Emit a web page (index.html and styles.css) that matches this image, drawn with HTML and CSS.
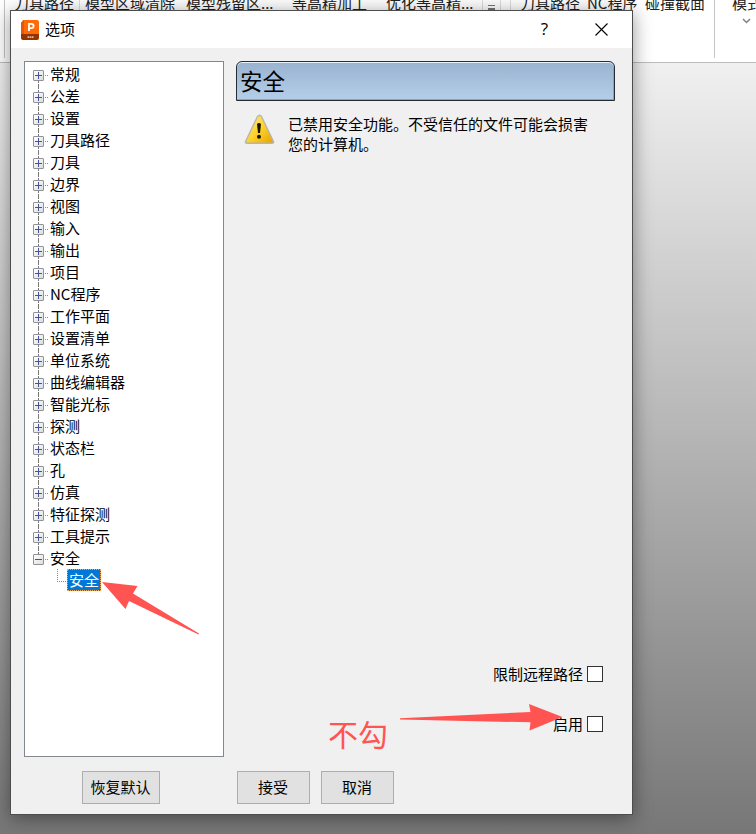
FILE: index.html
```html
<!DOCTYPE html>
<html lang="zh-CN">
<head>
<meta charset="utf-8">
<title>选项</title>
<link rel="stylesheet" href="styles.css">
</head>
<body>
<div class="ribbon">
  <i class="rule"></i>
  <span>刀具路径</span><i class="rule short"></i>
  <span>模型区域清除</span><span>模型残留区...</span><span>等高精加工</span><span>优化等高精...</span>
  <i class="rule short"></i><i class="more"></i><i class="rule short"></i><i class="rule short"></i>
  <span>刀具路径</span><span>NC程序</span><span>碰撞截面</span>
  <i class="rule"></i>
  <span class="mode">模式<svg width="9" height="6" viewBox="0 0 9 6"><path d="M1 1l3.5 3.5L8 1" fill="none" stroke="#808080" stroke-width="1.5"/></svg></span>
</div>
<div class="dialog">
  <header class="titlebar">
    <svg class="logo" width="18" height="20" viewBox="0 0 18 20">
      <path d="M0 3L3 0v17l-3 1z" fill="#d64a05"/><path d="M2 0h14q2 0 2 2v13H0V3z" fill="#ff6b08"/><path d="M0 3L3 0v14H0z" fill="#e95706"/><path d="M0 14h18v4q0 2-2 2H2q-2 0-2-2z" fill="#943500"/>
      <path d="M8 11V3.9h2.4q2.2 0 2.2 2.1T10.400 8.100H8" fill="none" stroke="#fff" stroke-width="1.8"/>
      <path d="M6.500 17.200h6.500" stroke="#dfb9a3" stroke-width="1.800" stroke-dasharray="1.600 .5"/>
    </svg>
    <h1>选项</h1>
    <span class="help">?</span>
    <svg class="close" width="13" height="13" viewBox="0 0 13 13"><path d="M.5.5l12 12M12.500.5l-12 12" stroke="#000" stroke-width="1.100"/></svg>
  </header>
  <main class="content">
    <ul class="tree">
      <li>常规</li><li>公差</li><li>设置</li><li>刀具路径</li><li>刀具</li><li>边界</li><li>视图</li><li>输入</li><li>输出</li><li>项目</li><li>NC程序</li><li>工作平面</li><li>设置清单</li><li>单位系统</li><li>曲线编辑器</li><li>智能光标</li><li>探测</li><li>状态栏</li><li>孔</li><li>仿真</li><li>特征探测</li><li>工具提示</li><li class="open">安全</li>
      <li class="child"><span>安全</span></li>
    </ul>
    <section class="panel">
      <h2>安全</h2>
      <div class="warning">
        <svg width="31" height="31" viewBox="0 0 31 31">
          <defs><linearGradient id="gold" x2="1" y2="1"><stop stop-color="#ffe98a"/><stop offset=".5" stop-color="#ffd32b"/><stop offset="1" stop-color="#e7a500"/></linearGradient></defs>
          <path d="M13 2q2.500-3 5 0l12 25q1 3-2 3H3q-3 0-2-3z" fill="#b5b5b2"/>
          <path d="M14 3q1.500-2 3 0l11.500 24q.5 1.500-1 1.500h-24q-1.500 0-1-1.500z" fill="url(#gold)"/>
          <path d="M13 10q2-2 4 0l-1 9h-2z" fill="#171500"/><circle cx="15" cy="22.800" r="2" fill="#171500"/>
        </svg>
        <p>已禁用安全功能。不受信任的文件可能会损害<br>您的计算机。</p>
      </div>
      <div class="options">
        <label><span>限制远程路径</span><input type="checkbox"></label>
        <label><span>启用</span><input type="checkbox"></label>
      </div>
    </section>
  </main>
  <footer class="actions"><button class="reset">恢复默认</button><button>接受</button><button>取消</button></footer>
</div>
<div class="note">不勾</div>
<svg class="marks" width="756" height="834" viewBox="0 0 756 834" fill="#ff5452">
  <path d="M102 582L137.500 586 133 593.500 199 633.500 198.500 634.500 129 601 125.500 609z"/>
  <path d="M400 718.300L530.500 712 529 704 562.500 717 529.500 730.500 530.500 722.300 400 719.600z"/>
</svg>
</body>
</html>
```
FILE: styles.css
```css
*, *::before, *::after { box-sizing: border-box; }
body {
  margin: 0;
  width: 756px;
  height: 834px;
  overflow: hidden;
  position: relative;
  background: linear-gradient(#f0f0f0 62px, #777 834px);
  color: #000;
  font: 15px/20px "Noto Sans CJK SC", sans-serif;
}
.ribbon {
  display: grid;
  grid-template-columns: 10px 65px 6px 101px 106px 94px 96px 6px 12px 10px 10px 67px 58px 69px 18px 1fr;
  padding-left: 4px;
  height: 63px;
  background: #fff;
  border-bottom: 1px solid #bdbdbd;
  color: #222;
  white-space: nowrap;
}
.ribbon span { margin-top: -7px; }
.rule { width: 1px; height: 58px; background: #c4c4c4; }
.rule.short { height: 10px; background: #ddd; }
.more { width: 7px; height: 5px; margin-top: 5px; border: solid #777; border-width: 1px 0 2px; }
.mode svg { display: block; margin: 5px 0 0 10px; }
.dialog {
  position: absolute;
  left: 10px;
  top: 10px;
  width: 623px;
  height: 805px;
  display: flex;
  flex-direction: column;
  background: #f0f0f0;
  border: 1px solid #4d4d4d;
  box-shadow: 0 3px 18px rgba(0, 0, 0, .42);
}
.titlebar {
  display: flex;
  align-items: center;
  height: 37px;
  padding: 0 24px 0 10px;
  background: #fff;
}
.titlebar h1 { margin: -2px 0 0 6px; font-size: 15px; font-weight: 400; }
.titlebar .close { margin: -1px 0 0 47px; }
.help { margin: -2px 0 0 auto; font: 17px "Open Sans", sans-serif; }
.content { display: flex; gap: 12px; height: 709px; padding: 13px 17px 0 13px; }
.tree {
  width: 200px;
  height: 696px;
  margin: 0;
  padding: 2px 0 0 8px;
  list-style: none;
  background: #fff;
  border: 1px solid #828790;
}
.tree li {
  display: flex;
  align-items: center;
  height: 22px;
  padding-bottom: 2px;
  background: repeating-linear-gradient(#777 0 3px, transparent 3px 4px) 5px 0 / 1px 22px no-repeat;
}
.tree li:first-child { background-position: 5px 12px; }
.tree li::before {
  content: "";
  flex: none;
  width: 11px;
  height: 11px;
  margin-top: 3px;
  border: 1px solid #929292;
  border-radius: 1px;
  background: linear-gradient(#3f5796, #3f5796) center / 7px 1px no-repeat, linear-gradient(#3f5796, #3f5796) center / 1px 7px no-repeat, linear-gradient(135deg, #fff, #ddd);
}
.tree li::after { content: ""; order: -1; width: 3px; margin: 2px -15px 0 12px; border-top: 1px dotted #888; }
.tree li:not(.child) { text-indent: 6px; }
.tree .open { background-size: 1px 8px; }
.tree .open::before { background: linear-gradient(#3f5796, #3f5796) center / 7px 1px no-repeat, linear-gradient(135deg, #fff, #ddd); }
.tree .child { padding: 0 0 2px 24px; background: none; }
.tree .child::before { width: 9px; height: 13px; margin: -9px 1px 0 0; border: dotted #888; border-width: 0 0 1px 1px; border-radius: 0; background: none; }
.tree .child::after { display: none; }
.tree .child span { flex: none; width: 34px; height: 22px; padding-left: 1px; color: #fff; background: #0078d7; border: 1px dotted #f7a354; line-height: 20px; }
.panel { display: flex; flex-direction: column; flex: 1; }
.panel h2 {
  margin: 0;
  height: 40px;
  padding: 0 3px;
  border: 1px solid #252c32;
  border-radius: 6px 6px 0 0;
  background: linear-gradient(#99b2cf, #b5cfea);
  box-shadow: inset 0 1px #e7f2ff, inset -1px -1px #48bddd;
  font-size: 22.5px;
  font-weight: 400;
  line-height: 37px;
}
.warning { display: flex; gap: 13px; margin: 13px 0 0 8px; }
.warning p { margin: 0; white-space: nowrap; }
.options { display: flex; flex-direction: column; align-items: flex-end; gap: 30px; margin: auto 12px 23px 0; }
.options label { display: flex; align-items: center; height: 20px; gap: 4px; }
.options input { appearance: none; width: 16px; height: 16px; margin: 0; border: 1px solid #333; background: #fff; }
.actions { display: flex; gap: 11px; padding: 14px 0 0 71px; }
.actions button { width: 73px; height: 33px; padding: 0 1px 2px 0; border: 1px solid #adadad; background: #e1e1e1; color: #000; font: inherit; }
.actions .reset { width: 78px; margin-right: 66px; }
.note { position: absolute; left: 328px; top: 713px; color: #ff5452; font-size: 30px; line-height: 40px; }
.marks { position: absolute; inset: 0; }
```
